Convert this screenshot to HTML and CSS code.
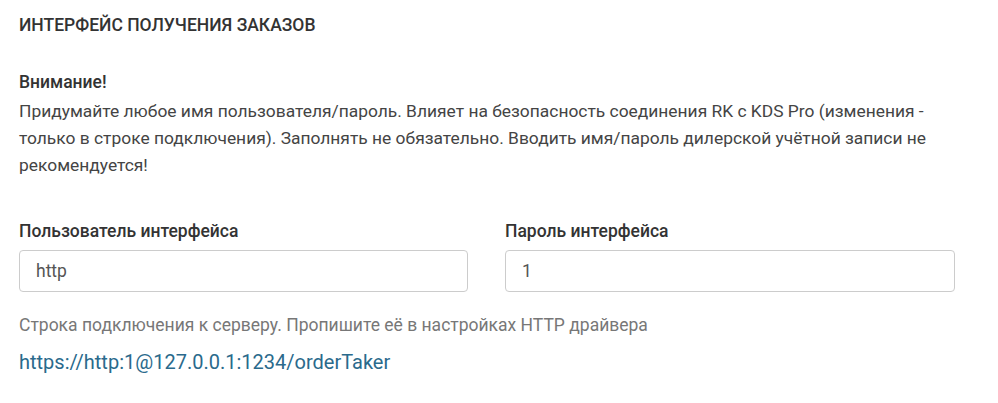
FILE: index.html
```html
<!DOCTYPE html>
<html lang="ru">
<head>
<meta charset="utf-8">
<title>Интерфейс получения заказов</title>
<link rel="stylesheet" href="styles.css">
</head>
<body>
<div class="panel">
  <h3 class="title">ИНТЕРФЕЙС ПОЛУЧЕНИЯ ЗАКАЗОВ</h3>
  <div class="notice">
    <div class="notice-head">Внимание!</div>
    <p class="notice-text">Придумайте любое имя пользователя/пароль. Влияет на безопасность соединения RK с KDS Pro (изменения - только в строке подключения). Заполнять не обязательно. Вводить имя/пароль дилерской учётной записи не рекомендуется!</p>
  </div>
  <div class="fields">
    <div class="field">
      <label class="label">Пользователь интерфейса</label>
      <input class="input" type="text" value="http">
    </div>
    <div class="field">
      <label class="label">Пароль интерфейса</label>
      <input class="input" type="text" value="1">
    </div>
  </div>
  <p class="hint">Строка подключения к серверу. Пропишите её в настройках HTTP драйвера</p>
  <a class="conn" href="#">https://http:1@127.0.0.1:1234/orderTaker</a>
</div>
</body>
</html>
```

FILE: styles.css
```css
html, body {
  margin: 0;
  padding: 0;
  background: #fff;
}
body {
  font-family: Roboto, "Noto Sans", "Liberation Sans", sans-serif;
  color: #444;
  font-size: 17.5px;
}
.panel {
  width: 936px;
  padding: 13px 0 0 19px;
}
.title {
  margin: 0;
  font-size: 17.5px;
  font-weight: 500;
  line-height: 24px;
  color: #333;
}
.notice {
  margin-top: 33px;
}
.notice-head {
  font-weight: 500;
  line-height: 24px;
  color: #333;
}
.notice-text {
  margin: 4px 0 0;
  font-size: 17.4px;
  line-height: 27px;
}
.fields {
  display: grid;
  grid-template-columns: 449px 450px;
  column-gap: 37px;
  margin-top: 40px;
}
.field {
  display: flex;
  flex-direction: column;
}
.label {
  font-weight: 500;
  line-height: 24px;
  color: #333;
  margin-bottom: 7px;
}
.input {
  box-sizing: border-box;
  height: 42px;
  border: 1px solid #ccc;
  border-radius: 4px;
  padding: 0 16px;
  font-family: inherit;
  font-size: 17.5px;
  color: #555;
  outline: none;
}
.hint {
  margin: 21px 0 0;
  line-height: 24px;
  color: #777;
}
.conn {
  display: inline-block;
  margin-top: 12px;
  font-size: 20px;
  line-height: 26px;
  color: #2a6a8c;
  text-decoration: none;
}
```
